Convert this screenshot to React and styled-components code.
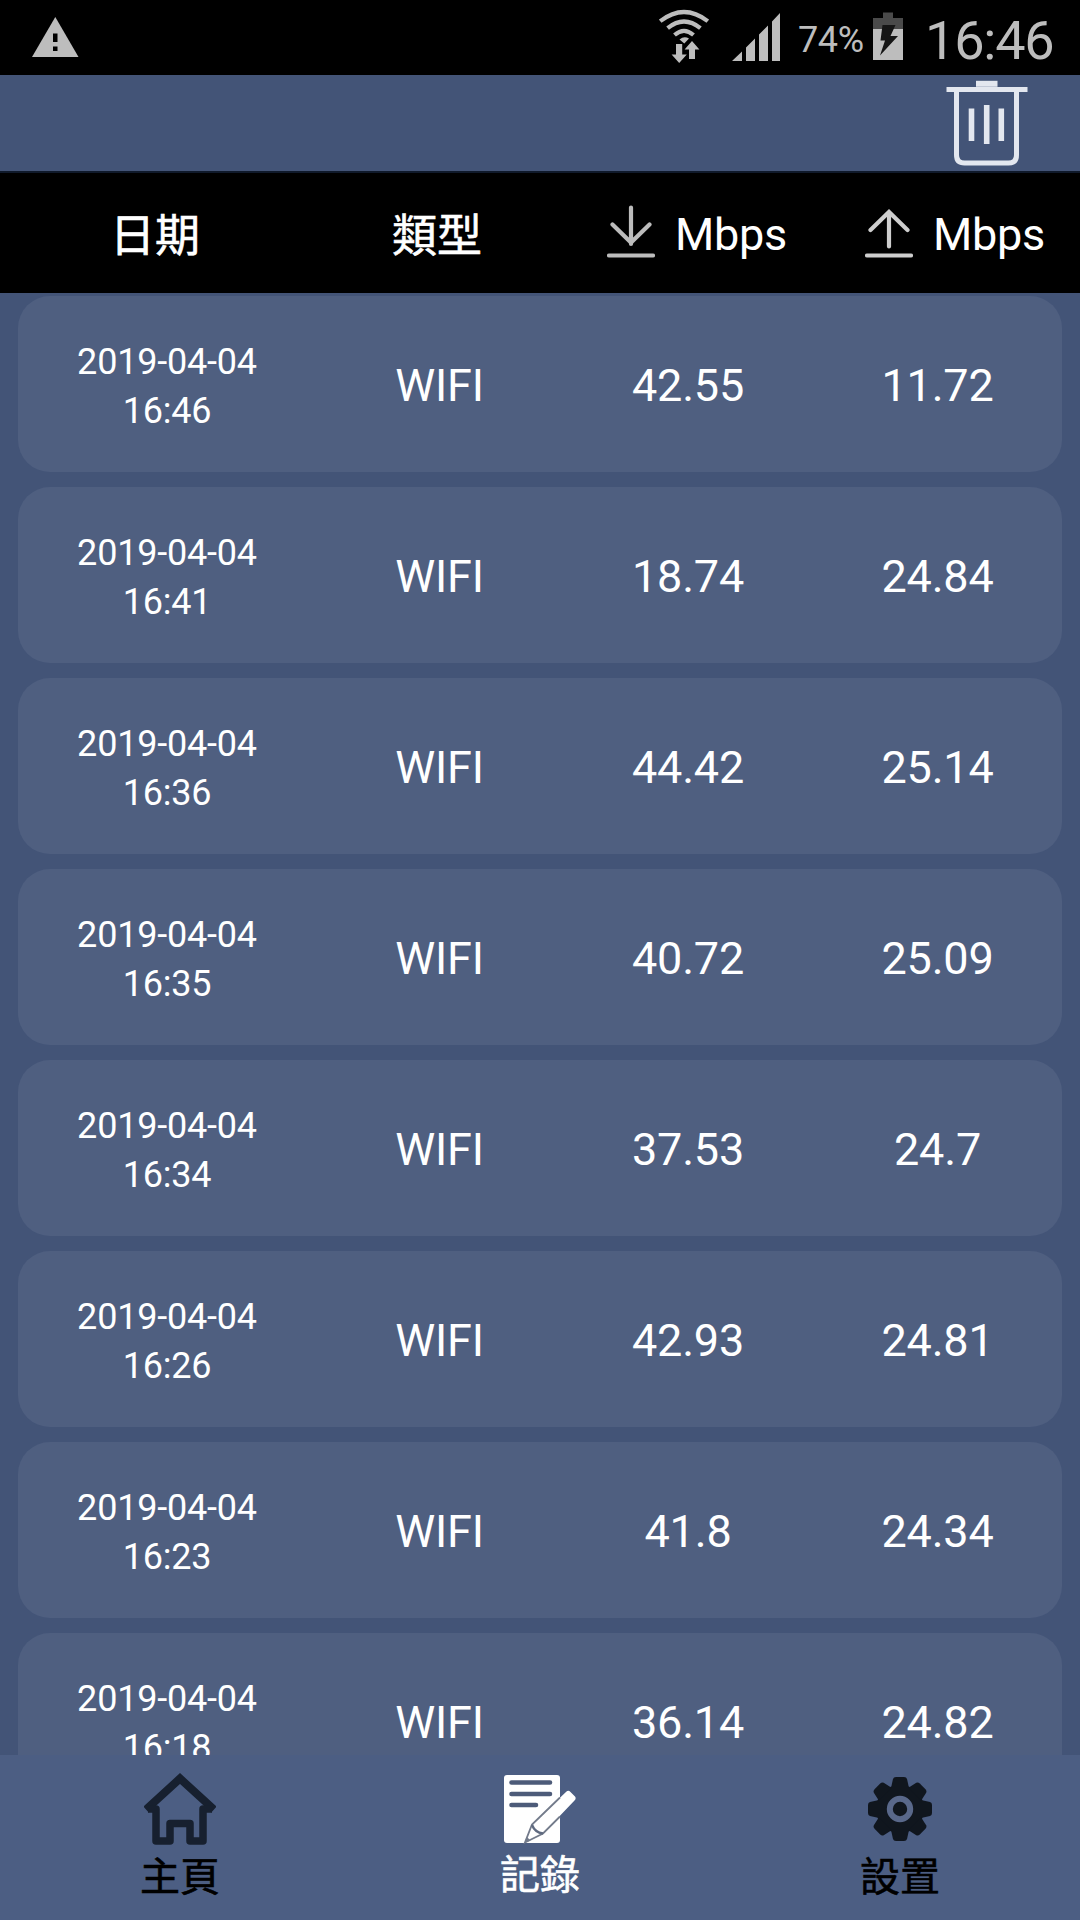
import React from 'react';
import styled, { createGlobalStyle } from 'styled-components';

const GlobalStyle = createGlobalStyle`
  * {
    box-sizing: border-box;
  }

  body {
    margin: 0;
    background: #435477;
    overflow: hidden;
  }
`;

const Screen = styled.div`
  display: flex;
  flex-direction: column;
  width: 1080px;
  height: 1920px;
  overflow: hidden;
  background: #435477;
  color: #fff;
  font-family: Roboto, 'Noto Sans CJK TC', sans-serif;
`;

const StatusBar = styled.div`
  display: flex;
  align-items: flex-start;
  flex: none;
  height: 75px;
  padding: 0 26px 0 32px;
  background: #000;
  color: #bdbdbd;

  svg {
    flex: none;
    display: block;
  }
`;

const StatusIcons = styled.div`
  display: flex;
  align-items: flex-start;
  margin-left: auto;
`;

const BatteryLevel = styled.span`
  width: 93px;
  padding-left: 18px;
  font-size: 36px;
  line-height: 80px;
  letter-spacing: -0.4px;
  white-space: nowrap;
`;

const Clock = styled.span`
  width: 129px;
  margin-left: 22px;
  font-size: 54px;
  line-height: 81px;
  letter-spacing: -1.2px;
  white-space: nowrap;
`;

const Toolbar = styled.div`
  display: flex;
  justify-content: flex-end;
  flex: none;
  height: 98px;
  padding: 5px 52px 0 0;
  border-bottom: 2px solid #101a2b;
`;

const TableHead = styled.div`
  display: grid;
  grid-template-columns: 310px 254px 258px 258px;
  flex: none;
  height: 120px;
  background: #000;
  font-size: 45px;
  line-height: 123px;
`;

const HeadCell = styled.div`
  padding-top: 2px;
  -webkit-text-stroke: 0.6px currentColor;
  text-align: center;
`;

const SpeedHead = styled.div`
  display: flex;
  align-items: flex-start;
  gap: 20px;
  padding-left: 43px;
  letter-spacing: -0.3px;
`;

const List = styled.div`
  display: flex;
  flex-direction: column;
  flex: none;
  gap: 15px;
  height: 1462px;
  padding: 3px 18px 0;
  overflow: hidden;
`;

const Card = styled.div`
  display: grid;
  grid-template-columns: 298px 247px 250px 249px;
  align-items: center;
  flex: none;
  height: 176px;
  border-radius: 32px;
  background: #4f5f80;
  text-align: center;
`;

const DateTime = styled.div`
  padding-top: 6px;
  font-size: 36px;
  line-height: 49px;
  letter-spacing: -0.2px;
`;

const Value = styled.div`
  padding-top: 3px;
  font-size: 45px;
  line-height: 56px;
  letter-spacing: -0.2px;
`;

const TabBar = styled.nav`
  display: grid;
  grid-template-columns: repeat(3, 1fr);
  flex: 1;
  background: #4c5e83;
`;

const Tab = styled.div`
  display: flex;
  flex-direction: column;
  align-items: center;
  padding-top: 14px;
  color: ${props => (props.$active ? '#fff' : '#000')};
  font-size: 40px;
  -webkit-text-stroke: 0.6px currentColor;

  svg {
    display: block;
    flex: none;
  }
`;

const TabLabel = styled.span`
  margin-top: ${props => (props.$active ? 1 : 3)}px;
  line-height: 56px;
`;

const WarningIcon = () => (
  <svg width="47" height="75" viewBox="0 0 47 75">
    <path d="M23.3 17 46.5 57H0Z" fill="#bdbdbd" />
    <path d="M21 33.5h4.5V42H21zM21 46.5h4.5V51H21z" fill="#000" />
  </svg>
);

const WifiIcon = () => (
  <svg width="50" height="75" viewBox="0 0 50 75">
    <g fill="none" stroke="#bdbdbd" strokeWidth="4.2">
      <path d="M1.2 21.2Q25 2.8 48.8 21.2" />
      <path d="M8.6 28.2Q25 14.8 41.4 28.2" />
      <path d="M15.5 35Q25 26.8 34.5 35" />
    </g>
    <path d="M20.5 39.5Q25 35.5 30 38.5L25.3 43.5Z" fill="#bdbdbd" />
    <path d="M17 44h6.2v10.5h4.6L20.2 63l-7.6-8.5H17z" fill="#bdbdbd" />
    <path d="M30 59v-9.5h-4.4L33 41l7.4 8.5H36V59z" fill="#bdbdbd" />
  </svg>
);

const SignalIcon = () => (
  <svg width="48" height="75" viewBox="0 0 48 75" fill="#bdbdbd">
    <path d="M0 61 10 51.5V61zM14 47.5 23 38.5V61H14zM27 34.5 36 25.5V61H27zM40 21.5 48 13V61H40z" />
  </svg>
);

const BatteryIcon = () => (
  <svg width="30" height="75" viewBox="0 0 30 75">
    <path d="M10 12.5h10V18h10v11H0V18h10z" fill="#4a4a4a" />
    <path d="M0 29h30v31H0z" fill="#bdbdbd" />
    <path d="M9.5 25H22.5L17.5 36H25L7 55.5 12 40.5H7.5z" fill="#151515" />
  </svg>
);

const TrashIcon = () => (
  <svg width="82" height="86" viewBox="0 0 82 86" fill="none" stroke="#e3e7ef">
    <path d="M30 3.8h21.5" strokeWidth="6" />
    <path d="M.5 9.5h81" strokeWidth="5" />
    <path d="M10.5 10v65q0 8 8 8h44q8 0 8-8V10" strokeWidth="5" />
    <path d="M25.5 28.5V61M40.7 25v39M55.3 28.5V61" strokeWidth="5.6" />
  </svg>
);

const DownloadIcon = () => (
  <svg width="48" height="120" viewBox="0 0 48 120" fill="none" stroke="#bcbcbc" strokeWidth="4.2" strokeLinecap="round">
    <path d="M24 34.5V71M5.5 51.5 24 69.5 42.5 51.5M2 82.5h44" />
  </svg>
);

const UploadIcon = () => (
  <svg width="48" height="120" viewBox="0 0 48 120" fill="none" stroke="#cecece" strokeWidth="4.2" strokeLinecap="round">
    <path d="M24 73.5V40M5.5 57 24 39 42.5 57M2 82.5h44" />
  </svg>
);

const HomeIcon = () => (
  <svg width="72" height="78" viewBox="0 0 72 78" fill="none" stroke="#17202f" strokeWidth="7.5" strokeLinejoin="round">
    <path d="M2 40.5 36 9.5 70 40.5" strokeWidth="8" strokeLinejoin="miter" />
    <path d="M4 40H12V72H26V54.5H46V72H59V40H68" />
  </svg>
);

const RecordIcon = () => (
  <svg width="72" height="78" viewBox="0 0 72 78">
    <rect x="0" y="6" width="56" height="68" rx="3" fill="#fff" />
    <path d="M7.5 13.5H46M7.5 25H46M7.5 36H32" stroke="#4d5b79" strokeWidth="4.6" strokeLinecap="round" />
    <path d="M62.5 22.5q2-1.5 4 .5l4.5 4.5q1.5 2-.5 4L39 64.5 21 73.5 28 55.5Z" fill="#fff" />
    <path d="M56 28.5 28 55.5 21 73.5 39 64.5 56 47.5" fill="none" stroke="#737b8b" strokeWidth="1.8" />
    <path d="M28 56Q31 63.5 39 64.5" fill="none" stroke="#5f6a80" strokeWidth="2.4" />
    <path d="M20.5 74 23 68 26.5 71.5Z" fill="#737b8b" />
  </svg>
);

const GearIcon = () => (
  <svg width="66" height="78" viewBox="-33 -40 66 78" fill="#10161e">
    <circle r="24" />
    {[0, 45, 90, 135, 180, 225, 270, 315].map(angle => (
      <path
        key={angle}
        d="M-9-21-7-30q.5-2 3-2h8q2.5 0 3 2l2 9z"
        transform={`rotate(${angle})`}
      />
    ))}
    <circle r="10.2" fill="none" stroke="#59688a" strokeWidth="6" />
  </svg>
);

const records = [
  { time: '16:46', down: '42.55', up: '11.72' },
  { time: '16:41', down: '18.74', up: '24.84' },
  { time: '16:36', down: '44.42', up: '25.14' },
  { time: '16:35', down: '40.72', up: '25.09' },
  { time: '16:34', down: '37.53', up: '24.7' },
  { time: '16:26', down: '42.93', up: '24.81' },
  { time: '16:23', down: '41.8', up: '24.34' },
  { time: '16:18', down: '36.14', up: '24.82' },
];

const Record = ({ time, down, up }) => (
  <Card>
    <DateTime>
      2019-04-04
      <br />
      {time}
    </DateTime>
    <Value>WIFI</Value>
    <Value>{down}</Value>
    <Value>{up}</Value>
  </Card>
);

const SignalGroup = styled.div`
  display: flex;
  gap: 23px;
`;

const App = () => (
  <Screen>
    <GlobalStyle />
    <StatusBar>
      <WarningIcon />
      <StatusIcons>
        <SignalGroup>
          <WifiIcon />
          <SignalIcon />
        </SignalGroup>
        <BatteryLevel>74%</BatteryLevel>
        <BatteryIcon />
        <Clock>16:46</Clock>
      </StatusIcons>
    </StatusBar>
    <Toolbar>
      <TrashIcon />
    </Toolbar>
    <TableHead>
      <HeadCell>日期</HeadCell>
      <HeadCell>類型</HeadCell>
      <SpeedHead>
        <DownloadIcon />
        Mbps
      </SpeedHead>
      <SpeedHead>
        <UploadIcon />
        Mbps
      </SpeedHead>
    </TableHead>
    <List>
      {records.map(record => (
        <Record key={record.time} {...record} />
      ))}
    </List>
    <TabBar>
      <Tab>
        <HomeIcon />
        <TabLabel>主頁</TabLabel>
      </Tab>
      <Tab $active>
        <RecordIcon />
        <TabLabel $active>記錄</TabLabel>
      </Tab>
      <Tab>
        <GearIcon />
        <TabLabel>設置</TabLabel>
      </Tab>
    </TabBar>
  </Screen>
);

export default App;
